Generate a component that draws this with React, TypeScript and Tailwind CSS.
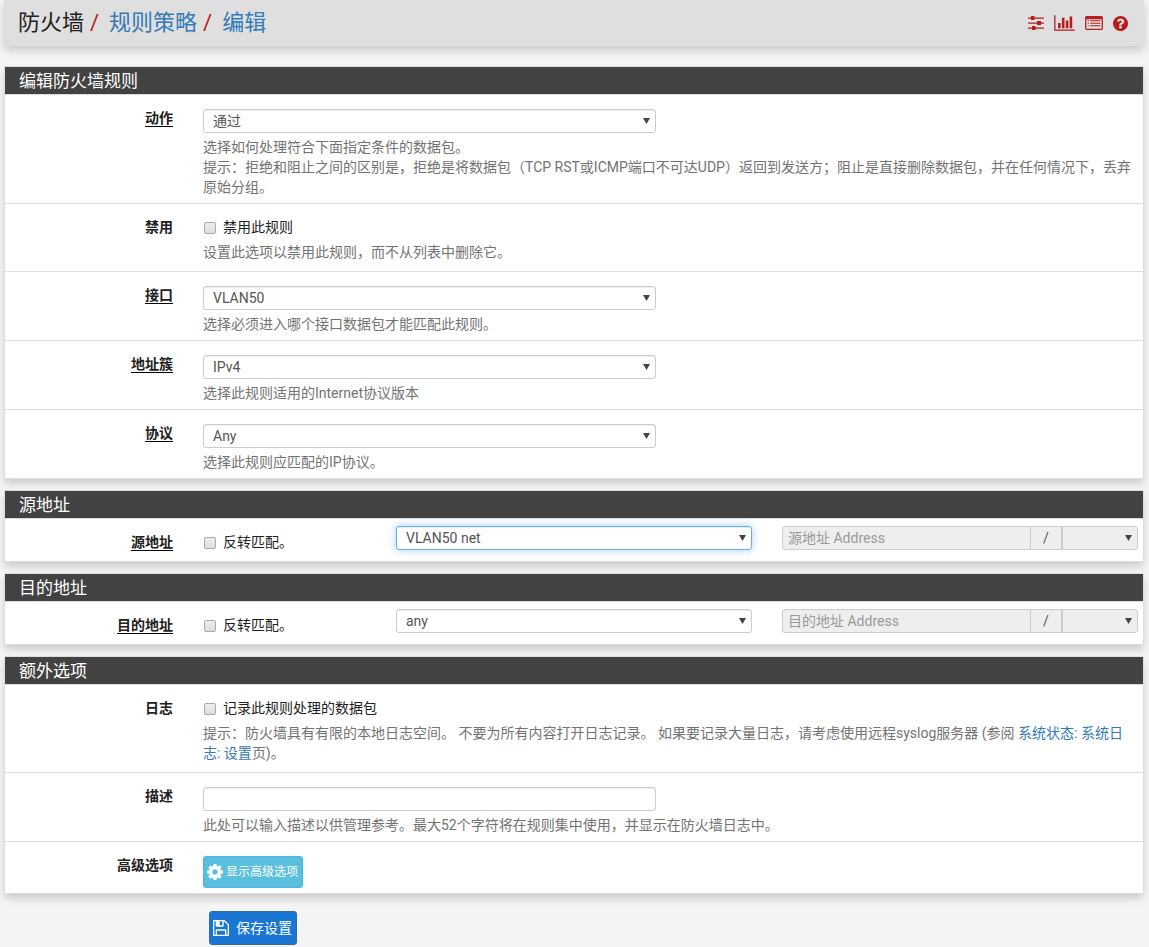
import React, { useState } from 'react';

const RED = 'text-[#b71c1c]';

const SlidersIcon = () => (
  <svg viewBox="0 0 16 14" className="w-4 h-3.5" fill="currentColor" aria-hidden="true">
    <path d="M0 1.500h16v1.200H0zM0 6.500h16v1.200H0zM0 11.500h16v1.200H0z" />
    <path d="M3 0h3.500v4H3zM9 5h4v4H9zM4 10h3.500v4H4z" />
  </svg>
);

const ChartIcon = () => (
  <svg viewBox="0 0 2048 1792" className="w-[21px] h-[18px]" fill="currentColor" aria-hidden="true">
    <path d="M640 896v512h-256v-512h256zm384-512v1024h-256v-1024h256zm1024 1152v128h-2048v-1536h128v1408h1920zm-640-896v768h-256v-768h256zm384-384v1152h-256v-1152h256z" />
  </svg>
);

const ListIcon = () => (
  <svg viewBox="0 256 1792 1408" className="w-[18px] h-3.5" fill="currentColor" aria-hidden="true">
    <path fillRule="evenodd" d="M160 256h1472q66 0 113 47t47 113v1088q0 66-47 113t-113 47h-1472q-66 0-113-47t-47-113v-1088q0-66 47-113t113-47zM128 608v896q0 32 32 32h1472q32 0 32-32v-896q0-32-32-32h-1472q-32 0-32 32z" />
    <path d="M256 672h128v110h-128zM512 672h1024v110h-1024zM256 928h128v110h-128zM512 928h1024v110h-1024zM256 1184h128v110h-128zM512 1184h1024v110h-1024z" />
  </svg>
);

const HelpIcon = () => (
  <svg viewBox="128 128 1536 1536" className="w-[15px] h-[15px]" fill="currentColor" aria-hidden="true">
    <path d="M1024 1376v-192q0-14-9-23t-23-9h-192q-14 0-23 9t-9 23v192q0 14 9 23t23 9h192q14 0 23-9t9-23zm256-672q0-88-55.500-163t-138.500-116-170-41q-243 0-371 213-15 24 8 42l132 100q7 6 19 6 16 0 25-12 53-68 86-92 34-24 86-24 48 0 85.500 26t37.500 59q0 38-20 61t-68 45q-63 28-115.500 86.500t-52.500 125.500v36q0 14 9 23t23 9h192q14 0 23-9t9-23q0-19 21.500-49.500t54.500-49.500q32-18 49-28.500t46-35 44.500-48 28-60.500 12.500-81zm384 192q0 209-103 385.500t-279.500 279.500-385.500 103-385.500-103-279.500-279.500-103-385.500 103-385.500 279.500-279.500 385.500-103 385.500 103 279.500 279.500 103 385.500z" />
  </svg>
);

const CogIcon = () => (
  <svg viewBox="0 128 1536 1536" className="w-4 h-4" fill="currentColor" fillRule="evenodd" aria-hidden="true">
    <path d="M1024 896q0-106-75-181t-181-75-181 75-75 181 75 181 181 75 181-75 75-181zm512-109v222q0 12-8 23t-20 13l-185 28q-19 54-39 91 35 50 107 138 10 12 10 25t-9 23q-27 37-99 108t-94 71q-12 0-26-9l-138-108q-44 23-91 38-16 136-29 186-7 28-36 28h-222q-14 0-24.500-8.500t-11.500-21.500l-28-184q-49-16-90-37l-141 107q-10 9-25 9-14 0-25-11-126-114-165-168-7-10-7-23 0-12 8-23 15-21 51-66.500t54-70.500q-27-50-41-99l-183-27q-13-2-21-12.500t-8-23.500v-222q0-12 8-23t19-13l186-28q14-46 39-92-40-57-107-138-10-12-10-24 0-10 9-23 26-36 98.500-107.500t94.500-71.500q13 0 26 10l138 107q44-23 91-38 16-136 29-186 7-28 36-28h222q14 0 24.500 8.500t11.500 21.500l28 184q49 16 90 37l142-107q9-9 24-9 13 0 25 10 129 119 165 170 7 8 7 22 0 12-8 23-15 21-51 66.500t-54 70.500q26 50 41 98l183 28q13 2 21 12.500t8 23.500z" />
  </svg>
);

const SaveIcon = () => (
  <svg viewBox="128 128 1536 1536" className="w-4 h-4" fill="currentColor" aria-hidden="true">
    <path d="M512 1536h768v-384h-768v384zm896 0h128v-896q0-14-10-38.500t-20-34.500l-281-281q-10-10-34-20t-39-10v416q0 40-28 68t-68 28h-576q-40 0-68-28t-28-68v-416h-128v1280h128v-416q0-40 28-68t68-28h832q40 0 68 28t28 68v416zm-384-928v-320q0-13-9.500-22.500t-22.500-9.500h-192q-13 0-22.500 9.500t-9.500 22.500v320q0 13 9.500 22.500t22.500 9.500h192q13 0 22.500-9.500t9.500-22.500zm640 32v928q0 40-28 68t-68 28h-1344q-40 0-68-28t-28-68v-1344q0-40 28-68t68-28h928q40 0 88 20t76 48l280 280q28 28 48 76t20 88z" />
  </svg>
);

const Panel: React.FC<{ title: string; children: React.ReactNode }> = ({ title, children }) => (
  <section className="mb-[11px] bg-white border border-[#ddd] shadow-[0_5px_8px_-1px_rgba(0,0,0,0.18)]">
    <h2 className="h-7 px-3.5 bg-[#424242] border-b border-[#ddd] text-[17px] leading-[29px] text-white">{title}</h2>
    <div className="divide-y divide-[#ddd] overflow-hidden">{children}</div>
  </section>
);

// row paddings: a field on top, a tick box on top, address rows
const FIELD = 'pt-[13px] pb-1.5';
const CHECK = 'pt-[13px] pb-[9px]';
const ADDRESS = 'pt-[7px] pb-[9px]';

const Row: React.FC<{ label: string; htmlFor: string; required?: boolean; pad: string; children: React.ReactNode }> = ({ label, htmlFor, required, pad, children }) => (
  <div className={`grid grid-cols-12 -mx-2.5 ${pad}`}>
    <div className={`col-span-2 px-[15px] text-right font-bold ${pad === ADDRESS ? 'pt-1.5' : ''}`}>
      <label htmlFor={htmlFor} className={required ? 'inline-block leading-4 border-b border-black' : 'inline-block leading-4'}>{label}</label>
    </div>
    {children}
  </div>
);

const Arrow = () => (
  <svg viewBox="0 0 7 6" className="absolute right-[6px] top-[9px] w-[7px] h-1.5 pointer-events-none" fill="#444" aria-hidden="true">
    <path d="M0 0h7L3.500 6z" />
  </svg>
);

const Select: React.FC<{ id: string; value: string; active?: boolean }> = ({ id, value, active }) => (
  <div className="relative">
    <select
      id={id}
      defaultValue={value}
      className={`block w-full h-6 appearance-none rounded-[3px] border bg-white px-[9px] text-[14px] leading-5 text-[#555] outline-none ${active ? 'border-[#66afe9] shadow-[inset_0_1px_1px_rgba(0,0,0,0.075),0_0_8px_rgba(102,175,233,0.6)]' : 'border-[#ccc] shadow-[inset_0_1px_1px_rgba(0,0,0,0.075)]'}`}
    >
      <option>{value}</option>
    </select>
    <Arrow />
  </div>
);

const Check: React.FC<{ id: string; text: string }> = ({ id, text }) => {
  const [on, setOn] = useState(false);
  return (
    <label className="flex items-center gap-[7px] pl-px">
      <input
        id={id}
        type="checkbox"
        checked={on}
        onChange={() => setOn(!on)}
        className="mt-0.5 w-3 h-3 appearance-none rounded-[2px] border border-[#aaa] bg-linear-to-b from-[#eee] to-[#dcdcdc] checked:from-[#337ab7] checked:to-[#337ab7]"
      />
      {text}
    </label>
  );
};

const FieldRow: React.FC<{ id: string; label: string; value: string; children: React.ReactNode }> = ({ id, label, value, children }) => (
  <Row label={label} htmlFor={id} required pad={FIELD}>
    <div className="col-span-5 px-[15px] pt-px"><Select id={id} value={value} /></div>
    <p className="col-span-10 col-start-3 px-[15px] mt-1 text-[#737373]">{children}</p>
  </Row>
);

const AddressRow: React.FC<{ id: string; label: string; value: string; active?: boolean }> = ({ id, label, value, active }) => (
  <Row label={label} htmlFor={id} required pad={ADDRESS}>
    <div className="col-span-2 px-[15px] pt-1.5"><Check id={`${id}not`} text="反转匹配。" /></div>
    <div className="col-span-4 px-[15px]"><Select id={id} value={value} active={active} /></div>
    <div className="col-span-4 px-[15px] flex text-[#555]">
      <input
        disabled
        aria-label={`${label} Address`}
        placeholder={`${label} Address`}
        className="min-w-0 flex-1 h-6 rounded-l-[3px] border border-[#ccc] bg-[#eee] px-[5px] placeholder:text-[#999]"
      />
      <span className="w-[31px] h-6 border-y border-r border-[#ccc] bg-[#eee] text-center leading-[22px]">/</span>
      <div className="relative w-[76px]">
        <select disabled aria-label="掩码" className="block w-full h-6 appearance-none rounded-r-[3px] border border-[#ccc] bg-[#eee]" />
        <Arrow />
      </div>
    </div>
  </Row>
);

const App: React.FC = () => (
  <div className="min-h-screen pl-1 pr-[5px] bg-[#f4f4f4] font-['Roboto','Noto_Sans_CJK_SC',sans-serif] text-[14px] leading-5 text-[#212121]">
    <header className="flex items-center justify-between h-[46px] mb-5 pl-3.5 pr-4 rounded-b-[3px] bg-[#dfdfdf] shadow-[0_4px_8px_rgba(0,0,0,0.18)]">
      <nav className="flex text-[22px] leading-[30px]">
        <span>防火墙</span>
        <span className={`px-1.5 ${RED}`}>/</span>
        <a href="#rules" className="pl-1 text-[#337ab7]">规则策略</a>
        <span className={`px-1.5 ${RED}`}>/</span>
        <a href="#edit" className="pl-1 text-[#337ab7]">编辑</a>
      </nav>
      <div className={`flex items-center gap-2.5 ${RED}`}>
        <a href="#settings" aria-label="设置"><SlidersIcon /></a>
        <a href="#status" aria-label="状态"><ChartIcon /></a>
        <a href="#logs" aria-label="日志"><ListIcon /></a>
        <a href="#help" aria-label="帮助"><HelpIcon /></a>
      </div>
    </header>

    <form onSubmit={(e) => e.preventDefault()}>
      <Panel title="编辑防火墙规则">
        <FieldRow id="type" label="动作" value="通过">
          选择如何处理符合下面指定条件的数据包。<br />
          提示：拒绝和阻止之间的区别是，拒绝是将数据包（TCP RST或ICMP端口不可达UDP）返回到发送方；阻止是直接删除数据包，并在任何情况下，丢弃原始分组。
        </FieldRow>
        <Row label="禁用" htmlFor="disabled" pad={CHECK}>
          <div className="col-span-10 px-[15px]">
            <Check id="disabled" text="禁用此规则" />
            <p className="mt-[5px] text-[#737373]">设置此选项以禁用此规则，而不从列表中删除它。</p>
          </div>
        </Row>
        <FieldRow id="interface" label="接口" value="VLAN50">选择必须进入哪个接口数据包才能匹配此规则。</FieldRow>
        <FieldRow id="ipprotocol" label="地址簇" value="IPv4">选择此规则适用的Internet协议版本</FieldRow>
        <FieldRow id="proto" label="协议" value="Any">选择此规则应匹配的IP协议。</FieldRow>
      </Panel>

      <Panel title="源地址">
        <AddressRow id="src" label="源地址" value="VLAN50 net" active />
      </Panel>

      <Panel title="目的地址">
        <AddressRow id="dst" label="目的地址" value="any" />
      </Panel>

      <Panel title="额外选项">
        <Row label="日志" htmlFor="log" pad={CHECK}>
          <div className="col-span-10 px-[15px]">
            <Check id="log" text="记录此规则处理的数据包" />
            <p className="mt-[5px] text-[#737373]">
              提示：防火墙具有有限的本地日志空间。 不要为所有内容打开日志记录。 如果要记录大量日志，请考虑使用远程syslog服务器 (参阅 <a href="#syslog" className="text-[#337ab7]">系统状态: 系统日志: 设置</a>页)。
            </p>
          </div>
        </Row>
        <Row label="描述" htmlFor="descr" pad={FIELD}>
          <div className="col-span-5 px-[15px] pt-px">
            <input id="descr" type="text" className="block w-full h-6 rounded-[3px] border border-[#ccc] px-[9px] text-[#555] shadow-[inset_0_1px_1px_rgba(0,0,0,0.075)]" />
          </div>
          <p className="col-span-10 col-start-3 px-[15px] mt-1 text-[#737373]">此处可以输入描述以供管理参考。最大52个字符将在规则集中使用，并显示在防火墙日志中。</p>
        </Row>
        <Row label="高级选项" htmlFor="advanced" pad="pt-[13px] pb-[5px]">
          <div className="col-span-5 px-[15px] pt-px">
            <button id="advanced" type="button" className="flex items-center gap-[3px] h-8 pl-[3px] pr-1 rounded-[3px] border border-[#46b8da] bg-[#5bc0de] text-[12px] text-white">
              <CogIcon />显示高级选项
            </button>
          </div>
        </Row>
      </Panel>

      <button type="submit" className="flex items-center gap-[7px] h-[34px] mt-[17px] ml-[205px] pl-[3px] pr-1 rounded-[3px] border border-[#2e6da4] bg-[#1976d2] text-[14px] text-white">
        <SaveIcon />保存设置
      </button>
    </form>
  </div>
);

export default App;
